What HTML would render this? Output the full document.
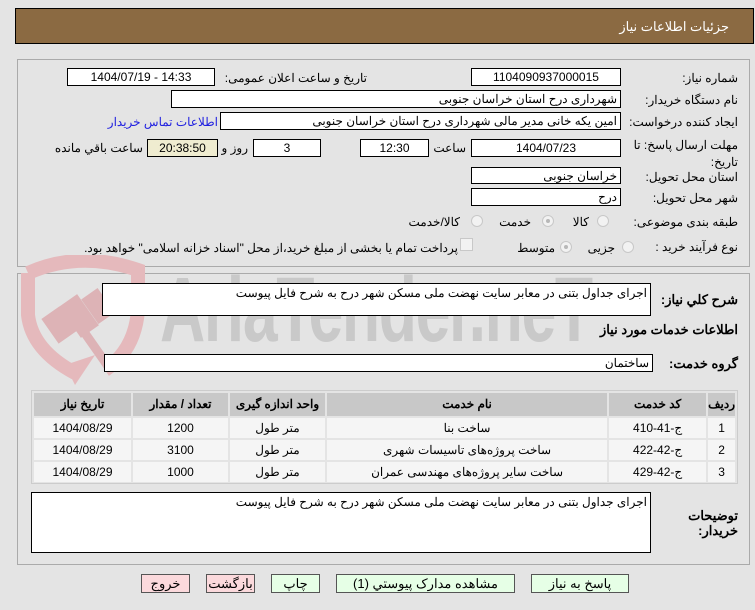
<!DOCTYPE html>
<html><head><meta charset="utf-8"><style>
*{box-sizing:border-box;margin:0;padding:0}
body{width:755px;height:610px;background:#e4e4e4;font-family:Tahoma,"Liberation Sans","Noto Sans CJK SC",sans-serif;font-size:12px;color:#000;position:relative;overflow:hidden}
.a{position:absolute}
.box{position:absolute;background:#fff;border:1px solid #000;text-align:center;line-height:16px;font-size:12px}
.r{text-align:right;padding-right:3px}
.lbl{position:absolute;white-space:nowrap;direction:rtl}
.rad{position:absolute;width:12px;height:12px;border-radius:50%;border:1px solid #c8c8c8;background:#f2f2f2}
.rad.on::after{content:"";position:absolute;left:3px;top:3px;width:4px;height:4px;border-radius:50%;background:#b8b8b8}
.btn{position:absolute;height:19px;border:1px solid #555;text-align:center;line-height:17px;font-size:13px;background:#e6ffe6}
.btn.p{background:#fbd9dc}
table{border-collapse:separate;border-spacing:2px;background:#e4e4e4}
td{background:#f5f5f5;text-align:center;font-size:12px;height:20px;padding:0;line-height:20px}
th{background:#c8c8c8;font-size:12px;height:23px;padding:0;line-height:23px}
</style></head><body>
<div class="a" style="left:15px;top:8px;width:739px;height:36px;background:#8b6a42;border:1px solid #000"></div>
<div class="lbl" style="right:26px;top:19px;color:#fff;font-size:13px">جزئیات اطلاعات نیاز</div>

<div class="a" style="left:17px;top:59px;width:733px;height:208px;border:1px solid #aaa"></div>
<div class="a" style="left:17px;top:273px;width:733px;height:292px;border:1px solid #aaa"></div>

<!-- watermark -->
<svg class="a" style="left:20px;top:255px" width="130" height="135" viewBox="0 0 130 135">
<path d="M8 18 Q60 -5 118 15 L118 55 Q115 95 85 115" fill="none" stroke="#e5b9bc" stroke-width="14"/>
<path d="M8 18 L8 60 Q12 95 55 118" fill="none" stroke="#e5b9bc" stroke-width="14"/>
<path d="M45 110 L75 100 L55 130 Z" fill="#e5b9bc"/>
<g fill="#ddb3b6"><rect x="28" y="55" width="22" height="30" transform="rotate(-35 39 70)"/><rect x="48" y="42" width="22" height="38" transform="rotate(-35 59 61)"/><rect x="68" y="36" width="20" height="30" transform="rotate(-35 78 51)"/><rect x="70" y="70" width="9" height="45" transform="rotate(-35 74 92)"/></g>
</svg>
<div class="a" style="left:160px;top:258px;font-size:92px;font-weight:bold;color:#c9c9c9;transform:scaleX(0.68);transform-origin:left top;font-family:'Liberation Sans',sans-serif;letter-spacing:-2px;white-space:nowrap">AriaTender.neT</div>

<!-- row1 -->
<div class="lbl" style="right:17px;top:71px">شماره نیاز:</div>
<div class="box" style="left:471px;top:68px;width:150px;height:18px">1104090937000015</div>
<div class="lbl" style="right:388px;top:71px">تاریخ و ساعت اعلان عمومی:</div>
<div class="box" style="left:67px;top:68px;width:148px;height:18px">1404/07/19 - 14:33</div>
<!-- row2 -->
<div class="lbl" style="right:17px;top:93px">نام دستگاه خریدار:</div>
<div class="box r" style="left:171px;top:90px;width:450px;height:18px">شهرداری درح استان خراسان جنوبی</div>
<!-- row3 -->
<div class="lbl" style="right:17px;top:115px">ایجاد کننده درخواست:</div>
<div class="box r" style="left:220px;top:112px;width:401px;height:18px">امین یکه خانی مدیر مالی شهرداری درح استان خراسان جنوبی</div>
<div class="lbl" style="right:537px;top:115px;color:#2020e0">اطلاعات تماس خریدار</div>
<!-- row4 -->
<div class="lbl" style="right:17px;top:137px;line-height:17px;text-align:right">مهلت ارسال پاسخ: تا<br>تاریخ:</div>
<div class="box" style="left:471px;top:139px;width:150px;height:18px">1404/07/23</div>
<div class="lbl" style="right:289px;top:141px">ساعت</div>
<div class="box" style="left:360px;top:139px;width:69px;height:18px">12:30</div>
<div class="box" style="left:253px;top:139px;width:68px;height:18px">3</div>
<div class="lbl" style="right:507px;top:141px">روز و</div>
<div class="box" style="left:147px;top:139px;width:71px;height:18px;background:#efecd0">20:38:50</div>
<div class="lbl" style="right:612px;top:141px">ساعت باقي مانده</div>
<!-- row5,6 -->
<div class="lbl" style="right:17px;top:170px">استان محل تحویل:</div>
<div class="box r" style="left:471px;top:167px;width:150px;height:17px">خراسان جنوبی</div>
<div class="lbl" style="right:17px;top:191px">شهر محل تحویل:</div>
<div class="box r" style="left:471px;top:188px;width:150px;height:18px">درح</div>
<!-- radios -->
<div class="lbl" style="right:17px;top:215px">طبقه بندی موضوعی:</div>
<div class="rad" style="left:597px;top:215px"></div><div class="lbl" style="right:166px;top:215px">کالا</div>
<div class="rad on" style="left:542px;top:215px"></div><div class="lbl" style="right:224px;top:215px">خدمت</div>
<div class="rad" style="left:471px;top:215px"></div><div class="lbl" style="right:295px;top:215px">کالا/خدمت</div>
<div class="lbl" style="right:17px;top:240px">نوع فرآیند خرید :</div>
<div class="rad" style="left:622px;top:241px"></div><div class="lbl" style="right:140px;top:241px">جزیی</div>
<div class="rad on" style="left:560px;top:241px"></div><div class="lbl" style="right:200px;top:241px">متوسط</div>
<div class="a" style="left:460px;top:238px;width:13px;height:13px;border:1px solid #c8c8c8;background:#f2f2f2"></div>
<div class="lbl" style="right:297px;top:241px">پرداخت تمام یا بخشی از مبلغ خرید،از محل "اسناد خزانه اسلامی" خواهد بود.</div>

<!-- panel2 -->
<div class="lbl" style="right:17px;top:292px;font-weight:bold;font-size:13px">شرح کلي نیاز:</div>
<div class="box r" style="left:102px;top:283px;width:549px;height:33px;line-height:16px;padding-top:1px">اجرای جداول بتنی در معابر سایت نهضت ملی مسکن شهر درح به شرح فایل پیوست</div>
<div class="lbl" style="right:17px;top:322px;font-weight:bold;font-size:13px">اطلاعات خدمات مورد نیاز</div>
<div class="lbl" style="right:17px;top:356px;font-weight:bold;font-size:13px">گروه خدمت:</div>
<div class="box r" style="left:104px;top:354px;width:549px;height:18px">ساختمان</div>

<div class="a" style="left:31px;top:390px;width:707px;height:94px;border:1px solid #ccc;background:#e4e4e4;overflow:hidden">
<table dir="rtl" style="width:705px">
<tr><th style="width:26px">ردیف</th><th style="width:97px">کد خدمت</th><th>نام خدمت</th><th style="width:95px">واحد اندازه گیری</th><th style="width:95px">تعداد / مقدار</th><th style="width:97px">تاریخ نیاز</th></tr>
<tr><td>1</td><td>ج-41-410</td><td>ساخت بنا</td><td>متر طول</td><td>1200</td><td>1404/08/29</td></tr>
<tr><td>2</td><td>ج-42-422</td><td>ساخت پروژه‌های تاسیسات شهری</td><td>متر طول</td><td>3100</td><td>1404/08/29</td></tr>
<tr><td>3</td><td>ج-42-429</td><td>ساخت سایر پروژه‌های مهندسی عمران</td><td>متر طول</td><td>1000</td><td>1404/08/29</td></tr>
</table></div>

<div class="lbl" style="right:17px;top:508px;font-weight:bold;font-size:13px;line-height:15px;text-align:right">توضیحات<br>خریدار:</div>
<div class="box r" style="left:31px;top:492px;width:620px;height:61px;line-height:16px;padding-top:1px">اجرای جداول بتنی در معابر سایت نهضت ملی مسکن شهر درح به شرح فایل پیوست</div>

<div class="btn" style="left:531px;top:574px;width:98px">پاسخ به نیاز</div>
<div class="btn" style="left:336px;top:574px;width:179px">مشاهده مدارک پیوستي (1)</div>
<div class="btn" style="left:271px;top:574px;width:49px">چاپ</div>
<div class="btn p" style="left:206px;top:574px;width:49px">بازگشت</div>
<div class="btn p" style="left:141px;top:574px;width:49px">خروج</div>
</body></html>
